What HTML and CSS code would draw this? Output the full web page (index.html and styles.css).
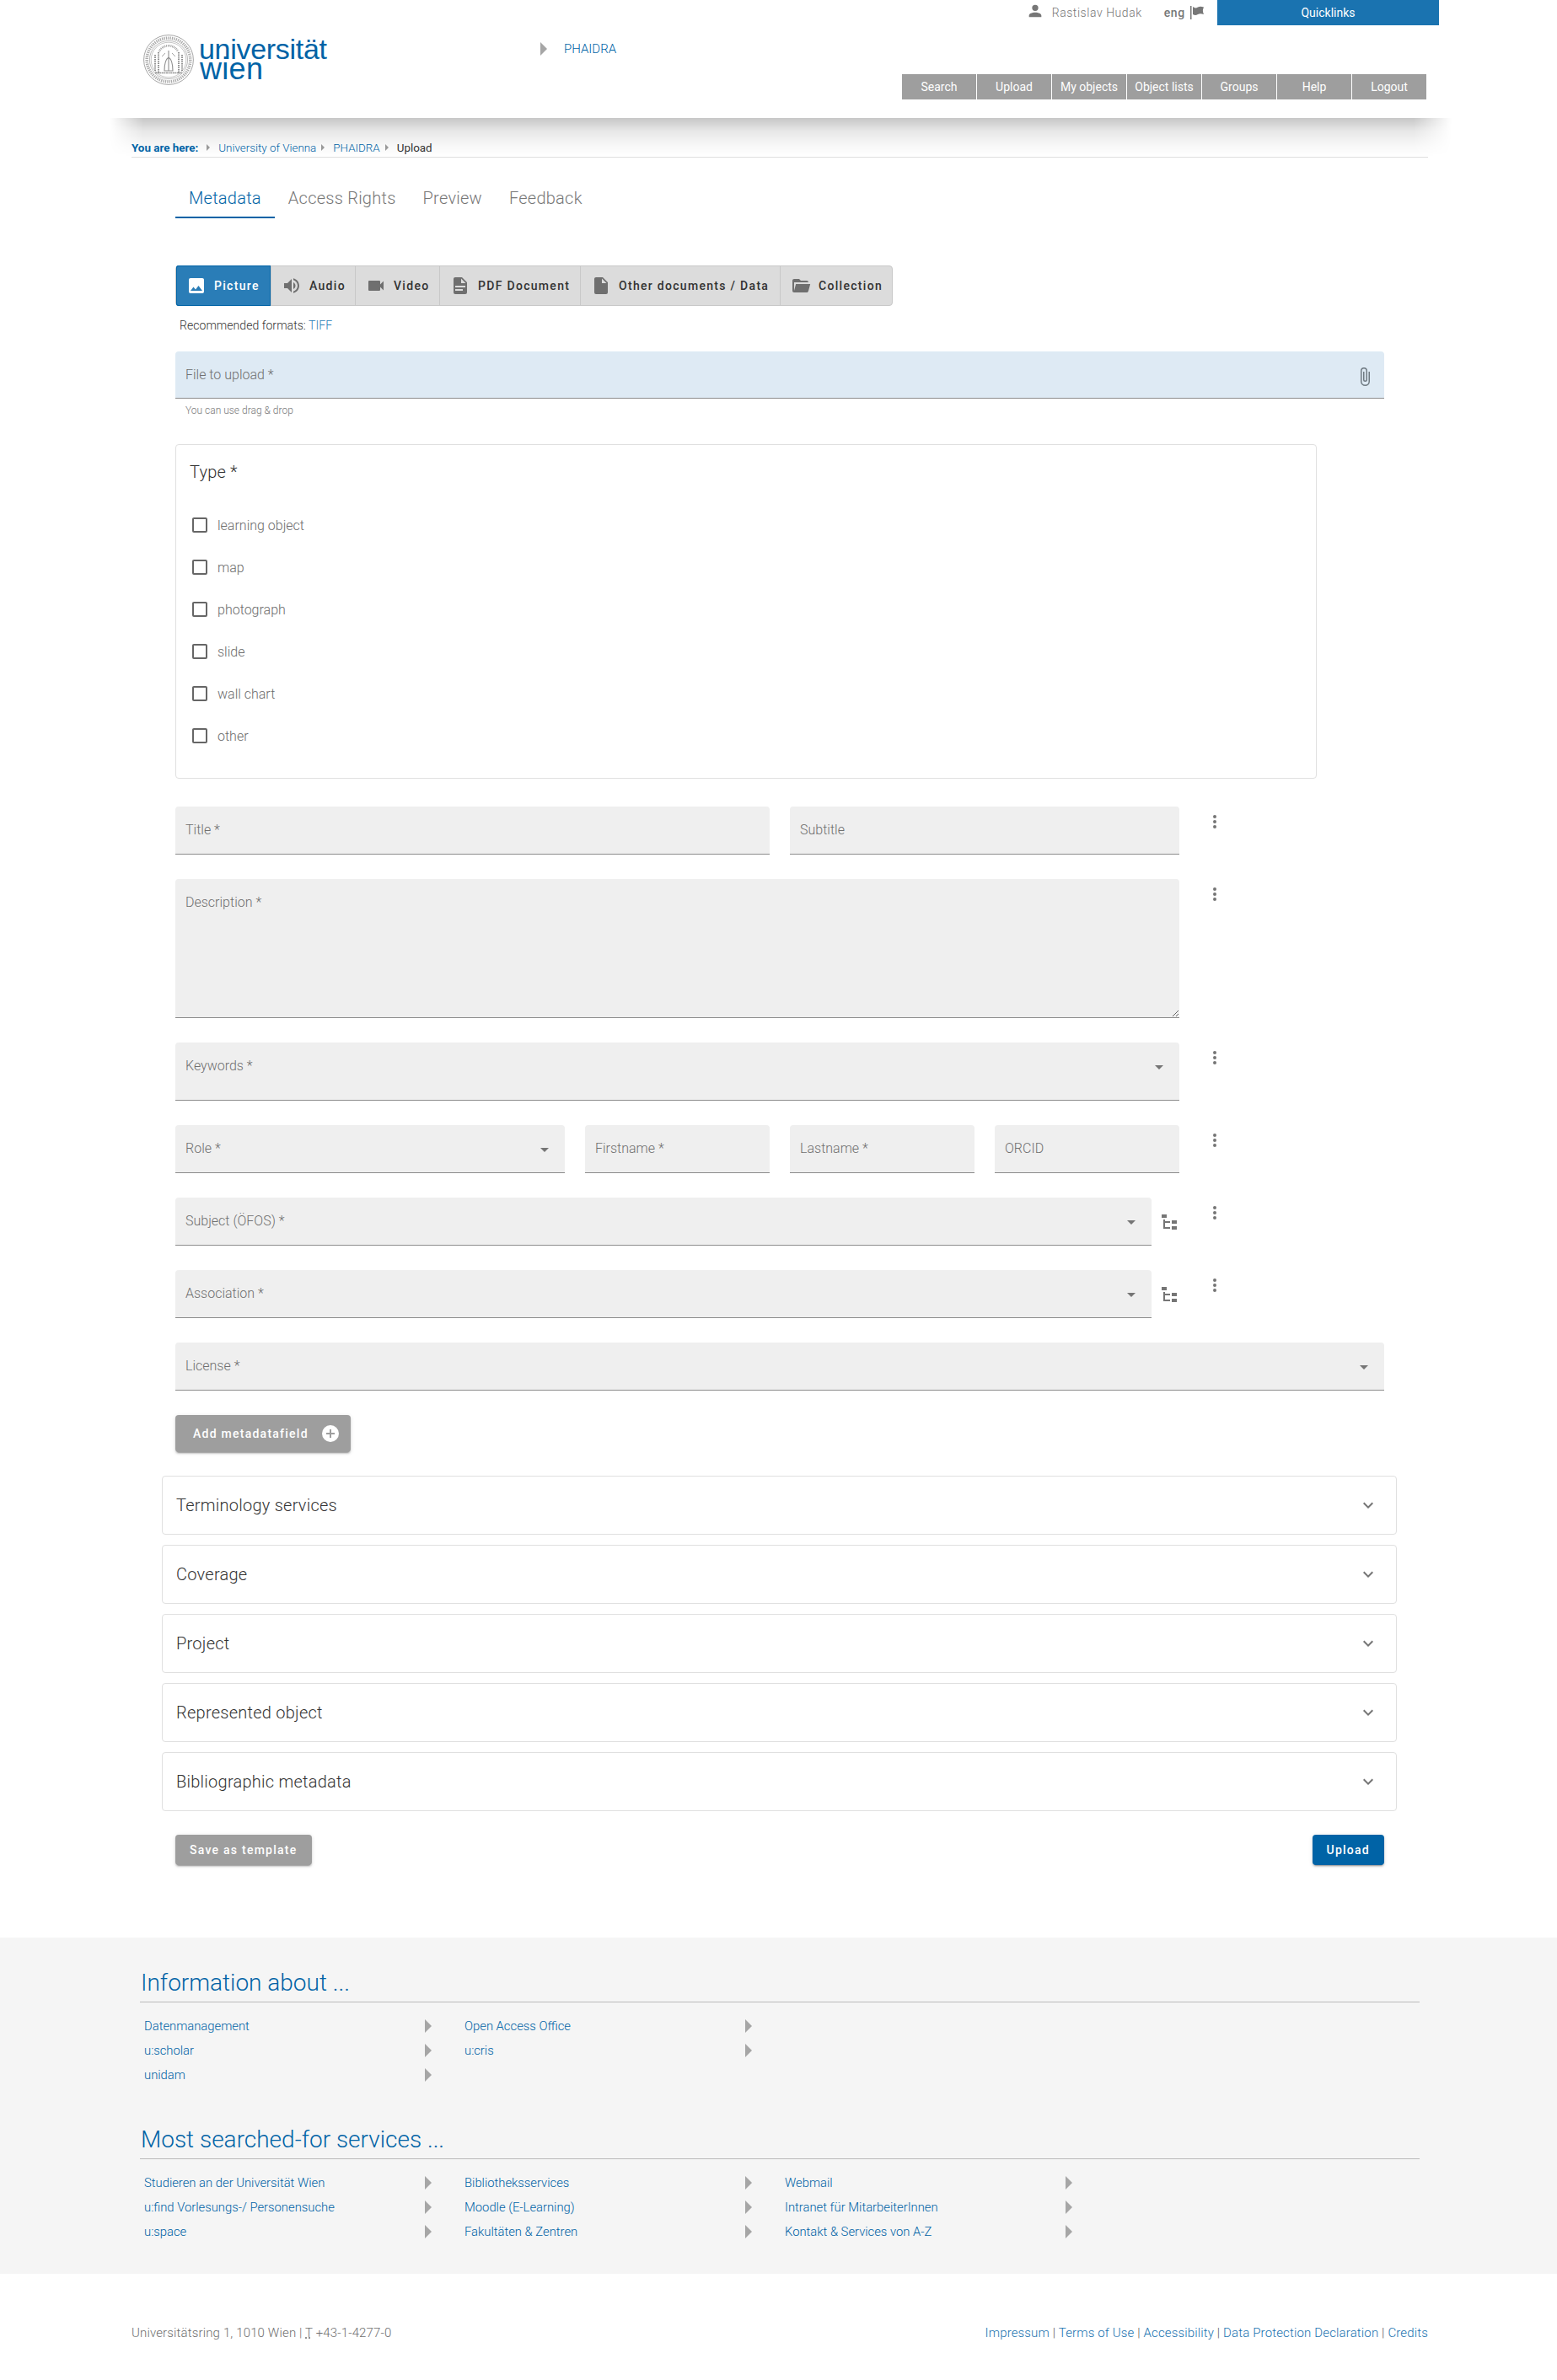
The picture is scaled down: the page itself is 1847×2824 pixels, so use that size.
FILE: index.html
```html
<!DOCTYPE html>
<html lang="en">
<head>
    <meta charset="UTF-8">
    <meta name="viewport" content="width=device-width, initial-scale=1.0">
    <title>PHAIDRA - Upload</title>
    <link rel="stylesheet" href="styles.css">
</head>
<body>
    <!-- icon sprites -->
    <svg class="sprites" xmlns="http://www.w3.org/2000/svg">
        <symbol id="i-account" viewBox="0 0 24 24"><path d="M12,4A4,4 0 0,1 16,8A4,4 0 0,1 12,12A4,4 0 0,1 8,8A4,4 0 0,1 12,4M12,14C16.42,14 20,15.79 20,18V20H4V18C4,15.79 7.58,14 12,14Z"/></symbol>
        <symbol id="i-flag" viewBox="0 0 16 16"><path d="M0,0H1.500V16H0ZM3,1C5,2.500 6.500,3 9,1.500C11,0.500 13,0.500 16,1.500C14.500,4.500 14.500,7 16,10C13,9 11,9 9,10C6.500,11.500 5,11 3,10Z"/></symbol>
        <symbol id="i-image" viewBox="0 0 24 24"><path d="M8.5,13.5L11,16.5L14.5,12L19,18H5M21,19V5C21,3.89 20.1,3 19,3H5A2,2 0 0,0 3,5V19A2,2 0 0,0 5,21H19A2,2 0 0,0 21,19Z"/></symbol>
        <symbol id="i-volume" viewBox="0 0 24 24"><path d="M14,3.23V5.29C16.89,6.15 19,8.83 19,12C19,15.17 16.89,17.84 14,18.7V20.77C18,19.86 21,16.28 21,12C21,7.72 18,4.14 14,3.23M16.5,12C16.5,10.23 15.5,8.71 14,7.97V16C15.5,15.29 16.5,13.76 16.5,12M3,9V15H7L12,20V4L7,9H3Z"/></symbol>
        <symbol id="i-video" viewBox="0 0 24 24"><path d="M17,10.5V7A1,1 0 0,0 16,6H4A1,1 0 0,0 3,7V17A1,1 0 0,0 4,18H16A1,1 0 0,0 17,17V13.5L21,17.5V6.5L17,10.5Z"/></symbol>
        <symbol id="i-pdf" viewBox="0 0 24 24"><path d="M13,9H18.5L13,3.5V9M6,2H14L20,8V20A2,2 0 0,1 18,22H6C4.89,22 4,21.1 4,20V4C4,2.89 4.89,2 6,2M15,18V16H6V18H15M18,14V12H6V14H18Z"/></symbol>
        <symbol id="i-file" viewBox="0 0 24 24"><path d="M13,9V3.5L18.5,9M6,2C4.89,2 4,2.89 4,4V20A2,2 0 0,0 6,22H18A2,2 0 0,0 20,20V8L14,2H6Z"/></symbol>
        <symbol id="i-folder" viewBox="0 0 24 24"><path d="M19,20H4C2.89,20 2,19.1 2,18V6C2,4.89 2.89,4 4,4H10L12,6H19A2,2 0 0,1 21,8H21L4,8V18L6.14,10H23.21L20.93,18.5C20.7,19.37 19.92,20 19,20Z"/></symbol>
        <symbol id="i-clip" viewBox="0 0 24 24"><path d="M16.5,6V17.5A4,4 0 0,1 12.5,21.5A4,4 0 0,1 8.5,17.5V5A2.5,2.5 0 0,1 11,2.5A2.5,2.5 0 0,1 13.5,5V15.5A1,1 0 0,1 12.5,16.5A1,1 0 0,1 11.5,15.5V6H10V15.5A2.5,2.5 0 0,0 12.5,18A2.5,2.5 0 0,0 15,15.5V5A4,4 0 0,0 11,1A4,4 0 0,0 7,5V17.5A5.5,5.5 0 0,0 12.5,23A5.5,5.5 0 0,0 18,17.5V6H16.5Z"/></symbol>
        <symbol id="i-check" viewBox="0 0 24 24"><path d="M19,3H5C3.89,3 3,3.89 3,5V19A2,2 0 0,0 5,21H19A2,2 0 0,0 21,19V5C21,3.89 20.1,3 19,3M19,5V19H5V5H19Z"/></symbol>
        <symbol id="i-dots" viewBox="0 0 24 24"><path d="M12,16A2,2 0 0,1 14,18A2,2 0 0,1 12,20A2,2 0 0,1 10,18A2,2 0 0,1 12,16M12,10A2,2 0 0,1 14,12A2,2 0 0,1 12,14A2,2 0 0,1 10,12A2,2 0 0,1 12,10M12,4A2,2 0 0,1 14,6A2,2 0 0,1 12,8A2,2 0 0,1 10,6A2,2 0 0,1 12,4Z"/></symbol>
        <symbol id="i-caret" viewBox="0 0 24 24"><path d="M7,10L12,15L17,10H7Z"/></symbol>
        <symbol id="i-tree" viewBox="0 0 24 24"><path d="M3,3H9V7H3V3M15,10H21V14H15V10M15,17H21V21H15V17M13,13H7V18H13V20H7L5,20V9H7V11H13V13Z"/></symbol>
        <symbol id="i-chevron" viewBox="0 0 24 24"><path d="M7.41,8.58L12,13.17L16.59,8.58L18,10L12,16L6,10L7.41,8.58Z"/></symbol>
        <symbol id="i-plus" viewBox="0 0 24 24"><path d="M17,13H13V17H11V13H7V11H11V7H13V11H17M12,2A10,10 0 0,0 2,12A10,10 0 0,0 12,22A10,10 0 0,0 22,12A10,10 0 0,0 12,2Z"/></symbol>
    </svg>

    <header class="site-head">
        <div class="head-left">
            <a class="logo" href="#">
                <svg class="seal" viewBox="0 0 60 60" fill="none" stroke="#8f8f8f">
                    <circle cx="30" cy="30" r="29.400" stroke-width="0.8"/>
                    <circle cx="30" cy="30" r="25.800" stroke-width="3.600" stroke-dasharray="1.300 1.100" opacity="0.75"/>
                    <circle cx="30" cy="30" r="22.600" stroke-width="0.6"/>
                    <circle cx="30" cy="30" r="20.800" stroke-width="0.5"/>
                    <path d="M14,43V24M18,45V21M42,45V21M46,43V24" stroke-width="2" stroke-dasharray="1.500 1"/>
                    <path d="M19,20C23,11 37,11 41,20" stroke-width="2.500" stroke-dasharray="0.800 1"/>
                    <path d="M30,19V43M25,43C25,35 27,29 30,27C33,29 35,35 35,43Z" stroke-width="1.100"/>
                    <path d="M22,26L26,22M38,26L34,22" stroke-width="0.800"/>
                    <path d="M14,45.500H46" stroke-width="1.500" stroke-dasharray="2 0.600"/>
                </svg>
                <span class="logo-text">universität<br><span class="logo-wien">wien</span></span>
            </a>
            <a class="head-link" href="#"><i class="tri tri-big"></i>PHAIDRA</a>
        </div>
        <div class="head-right">
            <div class="usermeta">
                <svg class="ico ico-user"><use href="#i-account"/></svg>
                <span class="username">Rastislav Hudak</span>
                <span class="lang">eng</span>
                <svg class="ico ico-flag"><use href="#i-flag"/></svg>
                <a class="quicklinks" href="#">Quicklinks</a>
            </div>
            <nav class="main-nav">
                <a href="#">Search</a>
                <a href="#">Upload</a>
                <a href="#">My objects</a>
                <a href="#">Object lists</a>
                <a href="#">Groups</a>
                <a href="#">Help</a>
                <a href="#">Logout</a>
            </nav>
        </div>
    </header>

    <div class="crumbs">
        <b>You are here:</b>
        <i class="tri tri-small first"></i><a href="#">University of Vienna</a>
        <i class="tri tri-small"></i><a href="#">PHAIDRA</a>
        <i class="tri tri-small"></i><span>Upload</span>
    </div>

    <main class="upload">
        <div class="tabs">
            <a class="tab active" href="#">Metadata</a>
            <a class="tab" href="#">Access Rights</a>
            <a class="tab" href="#">Preview</a>
            <a class="tab" href="#">Feedback</a>
        </div>

        <div class="formats">
            <button type="button" class="fmt active fmt-picture"><svg class="ico"><use href="#i-image"/></svg>Picture</button>
            <button type="button" class="fmt fmt-audio"><svg class="ico"><use href="#i-volume"/></svg>Audio</button>
            <button type="button" class="fmt fmt-video"><svg class="ico"><use href="#i-video"/></svg>Video</button>
            <button type="button" class="fmt fmt-pdf"><svg class="ico"><use href="#i-pdf"/></svg>PDF Document</button>
            <button type="button" class="fmt fmt-other"><svg class="ico"><use href="#i-file"/></svg>Other documents / Data</button>
            <button type="button" class="fmt fmt-coll"><svg class="ico"><use href="#i-folder"/></svg>Collection</button>
        </div>
        <p class="recommend">Recommended formats: <a href="#">TIFF</a></p>

        <div class="field field-file">
            <label>File to upload *</label>
            <svg class="ico"><use href="#i-clip"/></svg>
        </div>
        <p class="hint">You can use drag &amp; drop</p>

        <fieldset class="type-card">
            <h3>Type *</h3>
            <div class="check"><svg class="ico"><use href="#i-check"/></svg>learning object</div>
            <div class="check"><svg class="ico"><use href="#i-check"/></svg>map</div>
            <div class="check"><svg class="ico"><use href="#i-check"/></svg>photograph</div>
            <div class="check"><svg class="ico"><use href="#i-check"/></svg>slide</div>
            <div class="check"><svg class="ico"><use href="#i-check"/></svg>wall chart</div>
            <div class="check"><svg class="ico"><use href="#i-check"/></svg>other</div>
        </fieldset>

        <div class="row">
            <div class="fields">
                <div class="field col-title"><label>Title *</label></div>
                <div class="field col-sub"><label>Subtitle</label></div>
            </div>
            <svg class="ico dots"><use href="#i-dots"/></svg>
        </div>
        <div class="row">
            <div class="fields">
                <div class="field field-area"><label>Description *</label></div>
            </div>
            <svg class="ico dots"><use href="#i-dots"/></svg>
        </div>
        <div class="row">
            <div class="fields">
                <div class="field field-tall"><label>Keywords *</label><svg class="ico caret"><use href="#i-caret"/></svg></div>
            </div>
            <svg class="ico dots"><use href="#i-dots"/></svg>
        </div>
        <div class="row">
            <div class="fields">
                <div class="field col-role"><label>Role *</label><svg class="ico caret"><use href="#i-caret"/></svg></div>
                <div class="field col-name"><label>Firstname *</label></div>
                <div class="field col-name"><label>Lastname *</label></div>
                <div class="field col-name"><label>ORCID</label></div>
            </div>
            <svg class="ico dots"><use href="#i-dots"/></svg>
        </div>
        <div class="row">
            <div class="fields fields-tree">
                <div class="field grow"><label>Subject (ÖFOS) *</label><svg class="ico caret"><use href="#i-caret"/></svg></div>
                <svg class="ico tree"><use href="#i-tree"/></svg>
            </div>
            <svg class="ico dots"><use href="#i-dots"/></svg>
        </div>
        <div class="row">
            <div class="fields fields-tree">
                <div class="field grow"><label>Association *</label><svg class="ico caret"><use href="#i-caret"/></svg></div>
                <svg class="ico tree"><use href="#i-tree"/></svg>
            </div>
            <svg class="ico dots"><use href="#i-dots"/></svg>
        </div>
        <div class="row">
            <div class="field grow"><label>License *</label><svg class="ico caret"><use href="#i-caret"/></svg></div>
        </div>

        <button type="button" class="btn btn-add">Add metadatafield<svg class="ico"><use href="#i-plus"/></svg></button>

        <div class="panels">
            <div class="panel"><span>Terminology services</span><svg class="ico"><use href="#i-chevron"/></svg></div>
            <div class="panel"><span>Coverage</span><svg class="ico"><use href="#i-chevron"/></svg></div>
            <div class="panel"><span>Project</span><svg class="ico"><use href="#i-chevron"/></svg></div>
            <div class="panel"><span>Represented object</span><svg class="ico"><use href="#i-chevron"/></svg></div>
            <div class="panel"><span>Bibliographic metadata</span><svg class="ico"><use href="#i-chevron"/></svg></div>
        </div>

        <div class="actions">
            <button type="button" class="btn btn-small">Save as template</button>
            <button type="button" class="btn btn-small btn-primary">Upload</button>
        </div>
    </main>

    <section class="foot-links">
        <h2>Information about ...</h2>
        <ul>
            <li><a href="#">Datenmanagement</a><i class="tri tri-big"></i></li>
            <li><a href="#">Open Access Office</a><i class="tri tri-big"></i></li>
            <li class="blank"></li>
            <li><a href="#">u:scholar</a><i class="tri tri-big"></i></li>
            <li><a href="#">u:cris</a><i class="tri tri-big"></i></li>
            <li class="blank"></li>
            <li><a href="#">unidam</a><i class="tri tri-big"></i></li>
        </ul>
        <h2>Most searched-for services ...</h2>
        <ul>
            <li><a href="#">Studieren an der Universität Wien</a><i class="tri tri-big"></i></li>
            <li><a href="#">Bibliotheksservices</a><i class="tri tri-big"></i></li>
            <li><a href="#">Webmail</a><i class="tri tri-big"></i></li>
            <li><a href="#">u:find Vorlesungs-/ Personensuche</a><i class="tri tri-big"></i></li>
            <li><a href="#">Moodle (E-Learning)</a><i class="tri tri-big"></i></li>
            <li><a href="#">Intranet für MitarbeiterInnen</a><i class="tri tri-big"></i></li>
            <li><a href="#">u:space</a><i class="tri tri-big"></i></li>
            <li><a href="#">Fakultäten &amp; Zentren</a><i class="tri tri-big"></i></li>
            <li><a href="#">Kontakt &amp; Services von A-Z</a><i class="tri tri-big"></i></li>
        </ul>
    </section>

    <footer class="site-foot">
        <span class="address">Universitätsring 1, 1010 Wien | <abbr>T</abbr> +43-1-4277-0</span>
        <span class="legal"><a href="#">Impressum</a> | <a href="#">Terms of Use</a> | <a href="#">Accessibility</a> | <a href="#">Data Protection Declaration</a> | <a href="#">Credits</a></span>
    </footer>
</body>
</html>
```

FILE: styles.css
```css
body {
    font-family: Roboto, "Liberation Sans", sans-serif;
    font-size: 14px;
    margin: 0;
    padding: 0;
    background-color: #fff;
    color: #333;
}

a {
    color: #0063a6;
    text-decoration: none;
}

.sprites {
    display: none;
}

.ico {
    width: 24px;
    height: 24px;
    fill: currentColor;
    flex: none;
}

/* little grey arrows */
.tri {
    display: inline-block;
    width: 0;
    height: 0;
    border-style: solid;
    border-color: transparent transparent transparent #a6a6a6;
}

.tri-big {
    border-width: 8px 0 8px 8px;
}

.tri-small {
    border-width: 4px 0 4px 4px;
    border-left-color: #999;
}

/* header */
.site-head {
    display: flex;
    justify-content: space-between;
    height: 140px;
    margin-left: 140px;
    width: 1567px;
    background-color: #fff;
    position: relative;
}

/* soft shadow under the header, fades out at both sides */
.site-head::after {
    content: "";
    position: absolute;
    top: 100%;
    left: -10px;
    right: -15px;
    height: 46px;
    background: linear-gradient(to bottom, rgba(0, 0, 0, 0.22), rgba(0, 0, 0, 0.09) 35%, rgba(0, 0, 0, 0.03) 70%, rgba(0, 0, 0, 0));
    -webkit-mask-image: linear-gradient(to right, transparent, #000 40px, #000 calc(100% - 45px), transparent);
    mask-image: linear-gradient(to right, transparent, #000 40px, #000 calc(100% - 45px), transparent);
}

.head-left {
    display: flex;
    align-items: flex-start;
    padding-left: 30px;
}

.logo {
    display: flex;
    padding-top: 41px;
    width: 471px;
}

.seal {
    width: 60px;
    height: 60px;
}

.logo-text {
    display: block;
    margin-left: 6px;
    margin-top: 1px;
    font-family: "Liberation Sans", Arial, sans-serif;
    font-size: 34px;
    line-height: 23px;
    letter-spacing: -0.3px;
    color: #0063a6;
    padding-top: 5px;
}

.logo-wien {
    font-size: 36px;
    letter-spacing: 0.3px;
    margin-left: 1px;
}

.head-link {
    display: flex;
    align-items: center;
    margin-top: 50px;
    height: 16px;
    font-size: 15px;
    font-weight: 300;
}

.head-link .tri {
    margin-right: 20px;
}

.head-right {
    display: flex;
    flex-direction: column;
    align-items: flex-end;
}

.usermeta {
    display: flex;
    align-items: center;
    height: 30px;
    color: #777;
}

.ico-user {
    width: 22px;
    height: 22px;
    margin-right: 9px;
    margin-top: -4px;
    color: #777;
}

.username {
    font-weight: 300;
    letter-spacing: 0.55px;
}

.lang {
    margin-left: 26px;
    font-weight: 500;
    letter-spacing: 0.7px;
}

.ico-flag {
    width: 16px;
    height: 16px;
    margin-left: 6px;
    color: #777;
}

.quicklinks {
    display: block;
    width: 263px;
    margin-left: 16px;
    line-height: 30px;
    text-align: center;
    background-color: #1a73b0;
    color: #fff;
}

.main-nav {
    display: flex;
    margin-top: 58px;
    margin-right: 15px;
}

.main-nav a {
    width: 88px;
    line-height: 30px;
    text-align: center;
    background-color: #9e9e9e;
    color: #fff;
    border-left: 1px solid #fff;
}

.main-nav a:first-child {
    border-left: 0;
}

/* breadcrumb */
.crumbs {
    display: flex;
    align-items: center;
    position: relative;
    box-sizing: border-box;
    margin: 26px 153px 0 156px;
    height: 21px;
    padding-bottom: 2px;
    border-bottom: 1px solid #ddd;
    font-size: 13.4px;
    font-weight: 300;
}

.crumbs b {
    color: #0063a6;
    font-weight: 700;
}

.crumbs .tri {
    margin: 0 10px 0 6px;
}

.crumbs .tri.first {
    margin-left: 10px;
}

.crumbs span {
    font-weight: 400;
}

/* main form */
.upload {
    width: 1434px;
    margin-left: 208px;
}

.tabs {
    display: flex;
    margin-top: 24px;
}

.tab {
    height: 46px;
    line-height: 48px;
    padding: 0 16px;
    font-size: 20px;
    font-weight: 300;
    letter-spacing: 0.25px;
    color: #777;
    border-bottom: 2px solid transparent;
}

.tab.active {
    color: #0063a6;
    border-bottom-color: #0063a6;
}

.formats {
    display: flex;
    width: 851px;
    height: 48px;
    margin-top: 56px;
    box-sizing: border-box;
    border: 1px solid #c8c8c8;
    border-radius: 4px;
    background-color: #dcdcdc;
}

.fmt {
    display: flex;
    align-items: center;
    margin: 0;
    padding: 0 0 0 12px;
    height: 46px;
    border: 0;
    border-left: 1px solid #c8c8c8;
    background: none;
    font-family: inherit;
    font-size: 14px;
    font-weight: 500;
    letter-spacing: 1.3px;
    color: #333;
}

.fmt .ico {
    margin-right: 9px;
    color: #6f6f6f;
}

.fmt.active {
    background-color: #2a7db7;
    color: #fff;
    border-left: 0;
    border-radius: 3px 0 0 3px;
    margin: -1px 0;
    height: 48px;
    box-shadow: 0 0 0 1px #0063a6 inset;
}

.fmt.active .ico {
    color: #fff;
}

.fmt-picture { width: 112px; margin-left: -1px; }
.fmt-audio { width: 100px; }
.fmt-video { width: 100px; }
.fmt-pdf { width: 167px; }
.fmt-other { width: 237px; }
.fmt-coll { width: 133px; }

.recommend {
    margin: 13px 0 0 5px;
    line-height: 20px;
    font-weight: 300;
    letter-spacing: 0.05px;
}

.recommend a {
    color: #2a7db7;
}

.field {
    position: relative;
    display: flex;
    box-sizing: border-box;
    height: 57px;
    padding: 19px 12px 0;
    background-color: #efefef;
    border-bottom: 1px solid #8c8c8c;
    border-radius: 4px 4px 0 0;
    font-size: 16px;
    line-height: 18px;
    color: #6f6f6f;
    font-weight: 300;
}

.field label {
    flex: 1;
}

.field-file {
    height: 56px;
    margin-top: 21px;
    background-color: #deeaf4;
}

.field-file .ico {
    margin-top: -1px;
    margin-right: -1px;
    color: #6f7a82;
}

.hint {
    margin: 6px 0 0 12px;
    line-height: 16px;
    font-size: 12px;
    font-weight: 300;
    color: #777;
}

.type-card {
    box-sizing: border-box;
    width: 1354px;
    height: 397px;
    margin: 32px 0 0;
    padding: 16px 16px 0;
    border: 1px solid #e0e0e0;
    border-radius: 4px;
}

.type-card h3 {
    margin: 0 0 22px;
    font-size: 20px;
    line-height: 32px;
    font-weight: 300;
    letter-spacing: 0.2px;
}

.check {
    display: flex;
    align-items: center;
    height: 50px;
    font-size: 16px;
    font-weight: 300;
    color: #6c6c6c;
}

.check .ico {
    margin-right: 9px;
    color: #666;
}

.row {
    display: flex;
    margin-top: 29px;
}

.type-card + .row {
    margin-top: 33px;
}

.fields {
    display: flex;
    flex: none;
    width: 1191px;
    gap: 24px;
}

.fields .field {
    flex: 1;
}

.fields .col-title { flex: none; width: 705px; }
.fields .col-sub { flex: none; width: 462px; }
.fields .col-role { flex: none; width: 462px; }
.fields .col-name { flex: none; width: 219px; }

.fields-tree {
    gap: 9px;
}

.grow {
    flex: 1;
}

.field-area {
    height: 165px;
    overflow: hidden;
    resize: vertical;
}

.field-tall {
    height: 69px;
}

.caret {
    margin: -2px 0 0;
    color: #757575;
}

.tree {
    margin-top: 17px;
    color: #757575;
}

.dots {
    margin: 6px 0 0 30px;
    color: #757575;
}

.btn {
    display: flex;
    align-items: center;
    border: 0;
    border-radius: 4px;
    background-color: #9e9e9e;
    color: #fff;
    font-family: inherit;
    font-size: 14px;
    font-weight: 500;
    letter-spacing: 1.25px;
    box-shadow: 0 3px 1px -2px rgba(0, 0, 0, 0.2), 0 2px 2px 0 rgba(0, 0, 0, 0.14), 0 1px 5px 0 rgba(0, 0, 0, 0.12);
}

.btn-add {
    width: 208px;
    height: 44px;
    margin-top: 29px;
    padding: 0 0 0 21px;
}

.btn-add .ico {
    margin-left: 14px;
}

.panels {
    display: flex;
    flex-direction: column;
    gap: 12px;
    width: 1465px;
    margin: 28px 0 0 -16px;
}

.panel {
    display: flex;
    justify-content: space-between;
    align-items: center;
    box-sizing: border-box;
    height: 70px;
    padding: 0 21px 0 16px;
    border: 1px solid #e0e0e0;
    border-radius: 4px;
    font-size: 20px;
    font-weight: 300;
    letter-spacing: 0.25px;
    color: #333;
}

.panel .ico {
    color: #757575;
}

.actions {
    display: flex;
    justify-content: space-between;
    margin-top: 28px;
}

.btn-small {
    height: 36px;
    padding: 0 17px;
}

.btn-primary {
    background-color: #0063a6;
}

/* footer link blocks */
.foot-links {
    margin-top: 86px;
    height: 399px;
    padding: 34px 163px 0 166px;
    box-sizing: border-box;
    background-color: #f5f5f5;
}

.foot-links h2 {
    margin: 0;
    height: 42px;
    padding-left: 1px;
    line-height: 40px;
    font-size: 28px;
    font-weight: 300;
    color: #0063a6;
    border-bottom: 1px solid #bbb;
}

.foot-links ul {
    display: grid;
    grid-template-columns: repeat(3, 346px);
    column-gap: 34px;
    grid-auto-rows: 29px;
    margin: 13px 0 43px;
    padding: 0;
    list-style: none;
    height: 87px;
}

.foot-links li {
    display: flex;
    justify-content: space-between;
    align-items: center;
    padding-left: 5px;
    font-size: 14.8px;
    font-weight: 300;
}

.site-foot {
    display: flex;
    justify-content: space-between;
    align-items: center;
    height: 126px;
    padding: 14px 153px 0 156px;
    box-sizing: border-box;
    font-size: 15px;
    font-weight: 300;
    letter-spacing: 0.15px;
}

.address {
    color: #6f6f6f;
}

.legal {
    color: #555;
}

.legal a {
    color: #1a73b0;
}

abbr {
    text-decoration: underline dotted;
}
```
